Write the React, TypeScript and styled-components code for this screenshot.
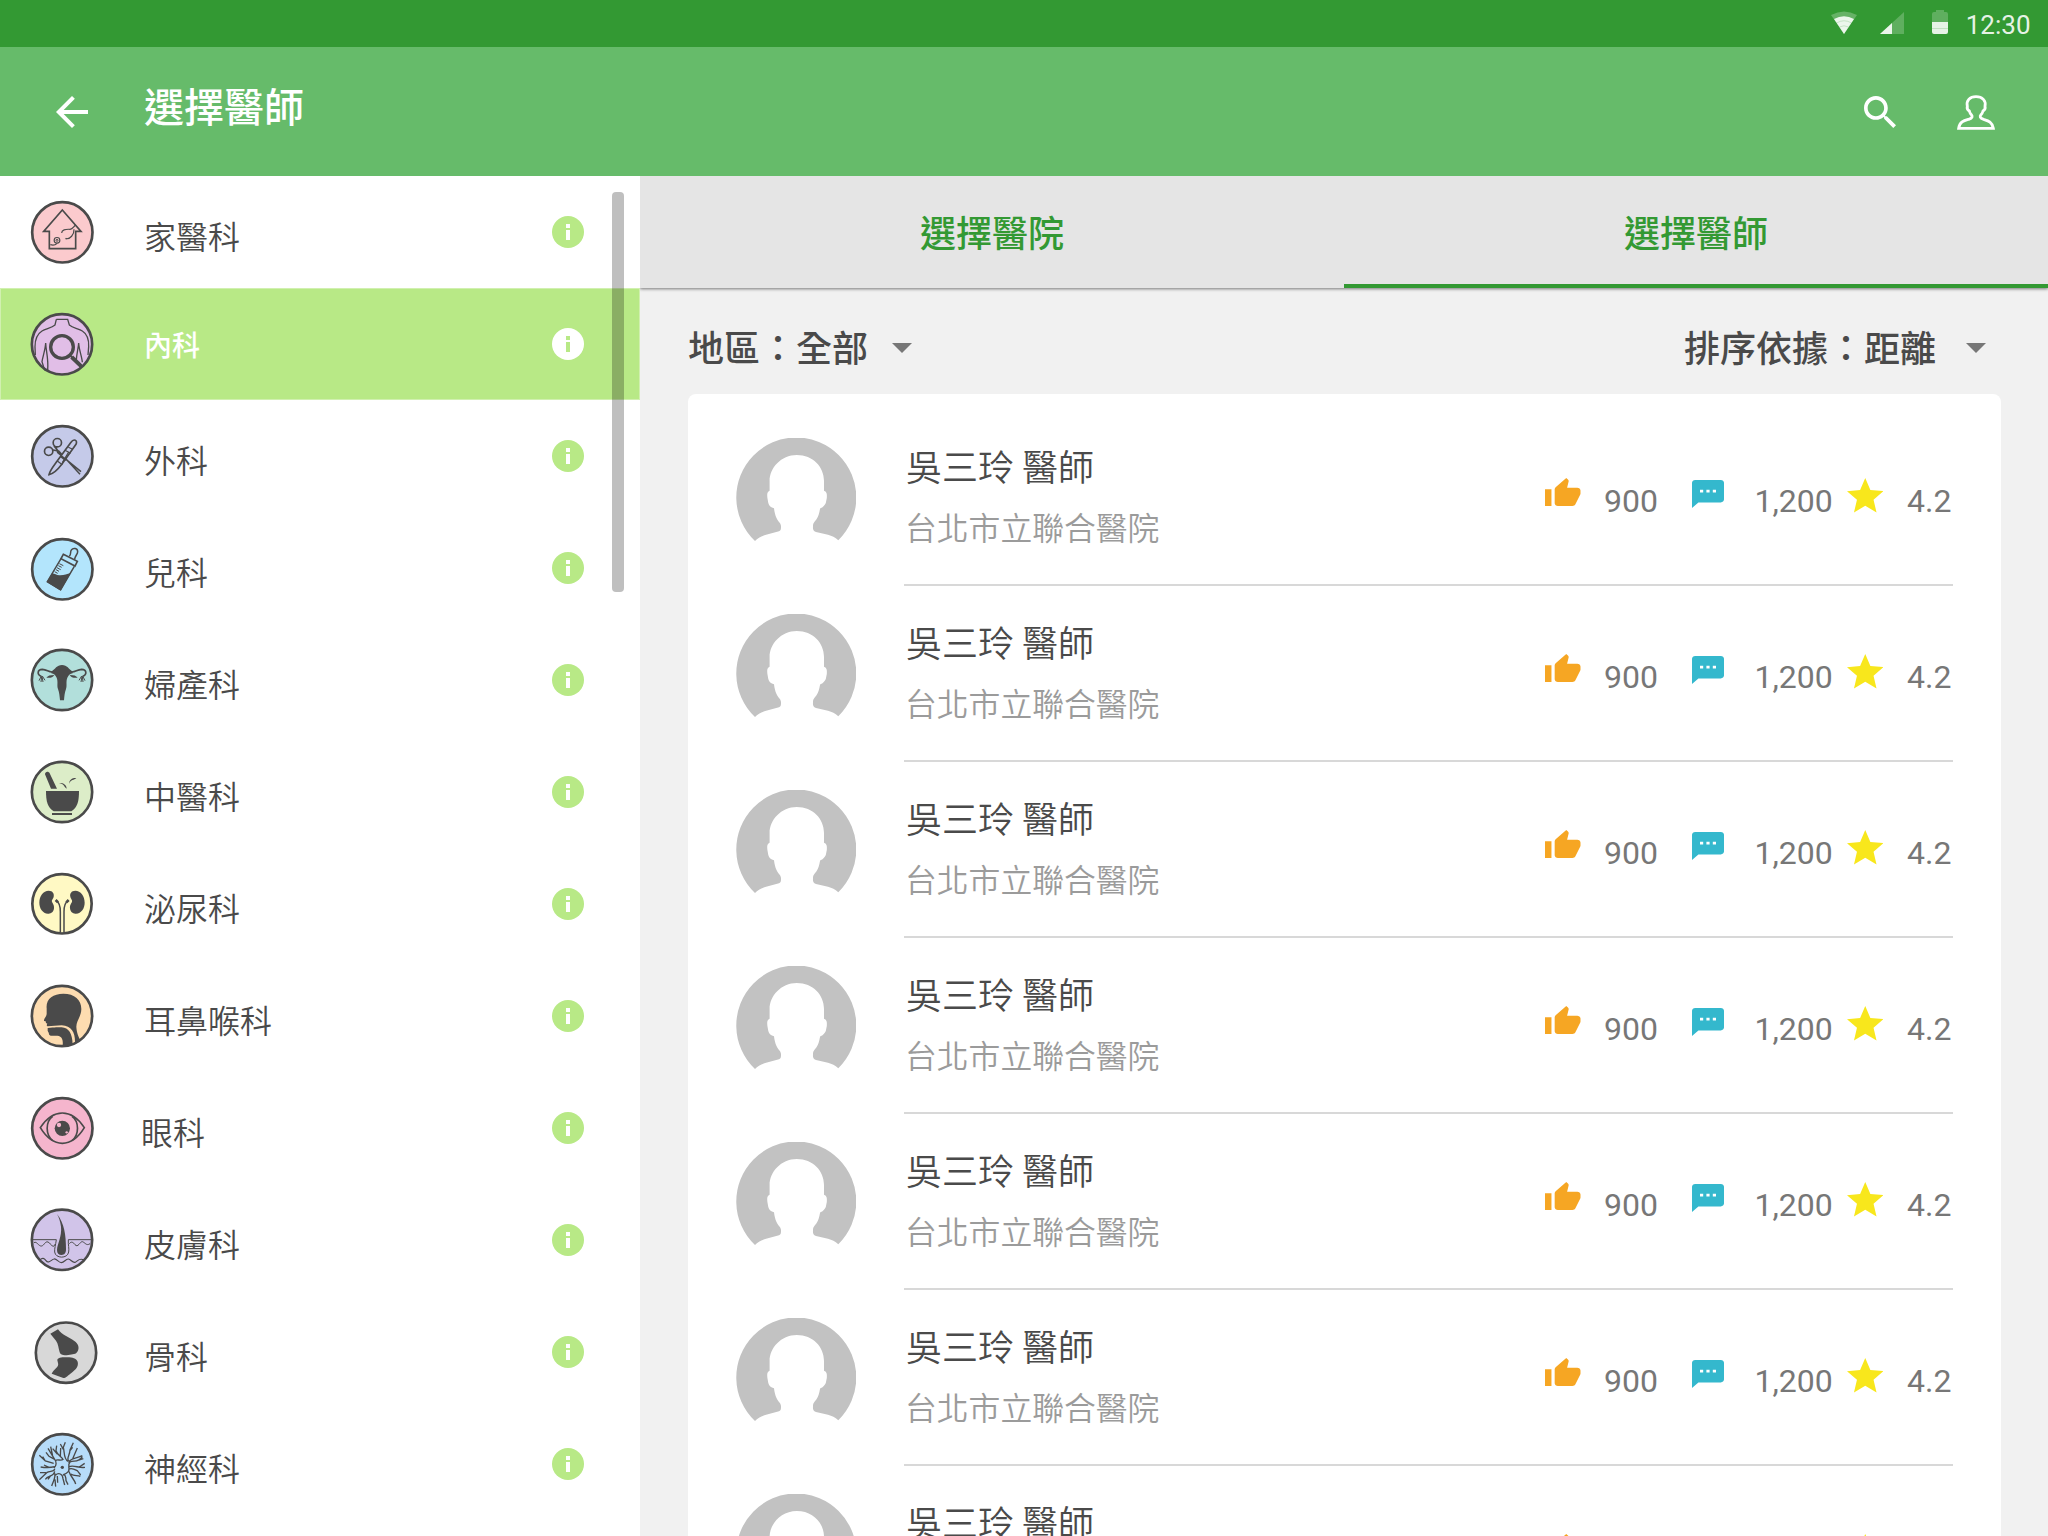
import React from "react";
import styled, { createGlobalStyle } from "styled-components";

const INK = "#4a4a4a";
const LIME = "#b8e986";
const GREEN = "#339933";

const GlobalStyle = createGlobalStyle`
  * { box-sizing: border-box; }
  body {
    margin: 0;
    overflow: hidden;
    background: #f1f1f1;
    font-family: Roboto, "Noto Sans CJK TC", sans-serif;
    color: ${INK};
  }
`;

const Screen = styled.div`
  display: flex;
  flex-direction: column;
  width: 2048px;
  height: 1536px;
  overflow: hidden;
`;

const StatusBar = styled.div`
  flex: none;
  height: 47px;
  background: ${GREEN};
  display: flex;
  justify-content: flex-end;
  padding: 9px 17.500px 0 0;
`;

const StatusIcon = styled.svg<{ $gap: number }>`
  display: block;
  flex: none;
  margin-right: ${(p) => p.$gap}px;
`;

const Clock = styled.span`
  font-size: 26px;
  line-height: 32px;
  color: rgba(255, 255, 255, 0.9);
`;

const AppBar = styled.header`
  flex: none;
  height: 129px;
  background: #66bb6a;
  color: #fff;
  display: flex;
  align-items: center;
  padding: 0 50px 0 48px;
`;

const Title = styled.h1`
  flex: 1;
  margin: 0 0 14px 48px;
  font-family: "Noto Sans CJK TC", sans-serif;
  font-size: 40px;
  line-height: 56px;
  font-weight: 500;
`;

const BarIcon = styled.svg<{ $gap?: number }>`
  display: block;
  flex: none;
  margin-right: ${(p) => p.$gap ?? 0}px;
`;

const Body = styled.div`
  flex: 1;
  min-height: 0;
  display: flex;
`;

const Sidebar = styled.nav`
  position: relative;
  flex: none;
  width: 640px;
  background: #fff;
  overflow: hidden;
`;

const ScrollThumb = styled.div`
  position: absolute;
  top: 16px;
  right: 16px;
  width: 12px;
  height: 400px;
  border-radius: 4px;
  background: rgba(0, 0, 0, 0.25);
`;

const DeptRow = styled.div<{ $active?: boolean }>`
  height: 112px;
  display: flex;
  align-items: center;
  padding: 0 56px 0 20px;
  background: ${(p) => (p.$active ? LIME : "#fff")};
  box-shadow: ${(p) => (p.$active ? "inset 0 0 0 1px rgba(255,255,255,.35)" : "none")};
`;

const DeptIcon = styled.svg`
  display: block;
  flex: none;
  width: 90px;
  height: 112px;
`;

const DeptName = styled.span<{ $active?: boolean; $shift?: number }>`
  flex: 1;
  padding-top: ${(p) => (p.$active ? 0 : 5)}px;
  margin-left: ${(p) => 34 + (p.$shift ?? 0)}px;
  font-family: "Noto Sans CJK TC", sans-serif;
  font-size: ${(p) => (p.$active ? 28 : 32)}px;
  font-weight: ${(p) => (p.$active ? 500 : 350)};
  line-height: 48px;
  color: ${(p) => (p.$active ? "#fff" : INK)};
`;

const Main = styled.main`
  flex: 1;
  min-width: 0;
  display: flex;
  flex-direction: column;
  background: #f1f1f1;
`;

const Tabs = styled.div`
  flex: none;
  display: flex;
  height: 112px;
  background: #e5e5e5;
  box-shadow: 0 1px 3px rgba(0, 0, 0, 0.5);
  clip-path: inset(0 0 -6px 0);
`;

const Tab = styled.div<{ $active?: boolean }>`
  flex: 1;
  display: flex;
  justify-content: center;
  padding-top: 29px;
  font-family: "Noto Sans CJK TC", sans-serif;
  font-size: 36px;
  line-height: 52px;
  font-weight: 500;
  color: ${GREEN};
  border-bottom: ${(p) => (p.$active ? `4px solid ${GREEN}` : "none")};
`;

const Filters = styled.div`
  flex: none;
  height: 106px;
  display: flex;
  justify-content: space-between;
  padding: 32px 48px 0;
`;

const Filter = styled.div<{ $gap: number }>`
  display: flex;
  align-items: flex-start;
  gap: ${(p) => p.$gap}px;
  font-family: "Noto Sans CJK TC", sans-serif;
  font-size: 36px;
  line-height: 52px;
  font-weight: 500;
`;

const Caret = styled.svg`
  display: block;
  width: 48px;
  height: 48px;
  margin-top: 3px;
`;

const Card = styled.section`
  flex: 1;
  min-height: 0;
  overflow: hidden;
  margin: 0 47px 0 48px;
  padding: 16px 48px 0;
  background: #fff;
  border-radius: 8px 8px 0 0;
`;

const Doctor = styled.article`
  height: 176px;
  display: flex;
  gap: 48px;
`;

const Avatar = styled.svg`
  flex: none;
  display: block;
  width: 120px;
  height: 120px;
  margin-top: 28px;
`;

const DoctorBody = styled.div`
  flex: 1;
  display: flex;
  justify-content: space-between;
  border-bottom: 2px solid #d8d8d8;
`;

const Identity = styled.div`
  padding: 29px 0 0 2px;
  font-family: "Noto Sans CJK TC", sans-serif;
  font-weight: 350;
`;

const Name = styled.div`
  font-size: 36px;
  line-height: 52px;
  white-space: pre;
`;

const Hospital = styled.div`
  margin: 11px 0 0 -1px;
  font-size: 31.800px;
  line-height: 48px;
  color: #9b9b9b;
`;

const Stats = styled.div`
  display: grid;
  grid-template-columns: 59px 88px 62.5px 92px 60.5px 46px;
  align-items: start;
  padding-top: 68px;
`;

const Stat = styled.span`
  padding-top: 4px;
  font-family: Roboto, sans-serif;
  font-size: 32px;
  line-height: 38px;
  color: #777;
`;

const StatIcon = styled.svg<{ $top: number }>`
  display: block;
  margin-top: ${(p) => p.$top}px;
`;

const Ring = ({ cx = 127, cy, r = 90.5, fill }: { cx?: number; cy: number; r?: number; fill: string }) => (
  <circle cx={cx} cy={cy} r={r} fill={fill} stroke={INK} strokeWidth="8" />
);

const HomeArt = (
  <>
    <Ring cy={127} fill="#fbcacd" />
    <path d="M127 60 L183 124 H167 V176 H88 V124 H71 Z" strokeWidth="5" />
    <path d="M125 129 C125 120 136 117 151 118 M150 118 C158 118 160 111 167 105 M162 118 C163 134 150 148 138 146 M111 160 C107 164 104 168 91 164" strokeWidth="3.500" />
    <circle cx="111" cy="151" r="8.500" strokeWidth="3.500" />
    <circle cx="111" cy="151" r="3" strokeWidth="3" />
    <circle cx="138" cy="146" r="1.500" strokeWidth="2" />
  </>
);

const TorsoArt = (
  <>
    <Ring cx={126} cy={463} fill="#e1bee7" />
    <path d="M109 388 H143 L148 405 C158 414 176 416 187 423 C203 433 207 448 206 470 L204 495 M109 388 L105 405 C95 414 77 416 66 423 C50 433 45 448 45 470 L46 495" strokeWidth="4" />
    <path d="M77 459 C76 480 68 500 66 515 L74 541 M77 459 C78 485 86 505 83 541 M176 459 C175 475 170 490 169 510 M176 459 C177 480 186 500 187 517" strokeWidth="4" />
    <circle cx="126" cy="471" r="34" strokeWidth="10" />
    <path d="M155 501 L184 529" strokeWidth="12" />
    <path d="M150 496 L160 506" strokeWidth="6" />
  </>
);

const SurgeryArt = (
  <>
    <Ring cy={799} fill="#c5cae9" />
    <circle cx="112" cy="758" r="12.500" strokeWidth="5" />
    <circle cx="86" cy="784" r="12.500" strokeWidth="5" />
    <path d="M108 770 L113 788 L183 845 M98 780 L116 783 L180 853 M102 768 L122 792" strokeWidth="4.500" />
    <path d="M87 854 C90 841 101 828 111 814 L153 757 C161 745 174 750 168 763 L126 822 C114 838 102 851 87 854 Z" fill="#c5cae9" strokeWidth="5" />
    <path d="M112 813 L127 824 M135 781 L152 790 M127 818 L146 786 M145 772 L158 778" strokeWidth="3.500" />
    <path d="M122 798 L138 810" strokeWidth="7" />
  </>
);

const BottleArt = (
  <>
    <Ring cy={133} fill="#b3e5fc" />
    <path d="M148 94 C154 88 150 80 154 75 C160 67 173 70 173 80 C173 88 165 92 164 103" strokeWidth="4.500" />
    <path d="M130 88 L172 109 L165 123 L123 101 Z" strokeWidth="5" />
    <path d="M123 101 L82 170 L122 194 L163 124" strokeWidth="4.500" />
    <path d="M96 145 C106 146 108 151 118 151 C132 152 140 146 152 144 L122 197 L80 171 Z" fill={INK} stroke="none" />
    <path d="M118 116 L130 122 M115 122 L125 127 M111 128 L122 134 M108 134 L117 139 M104 140 L113 145" strokeWidth="3" />
  </>
);

const UterusArt = (
  <>
    <Ring cx={126} cy={465} fill="#b2dfdb" />
    <path d="M94 440 C106 432 110 420 126 420 C142 420 146 432 158 440 L158 445 C150 446 147 450 142 458 C137 470 142 482 138 492 C134 502 133 515 132 526 L120 526 C119 515 118 502 114 492 C110 482 115 470 110 458 C105 450 102 446 94 445 Z" fill={INK} stroke="none" />
    <path d="M98 441 C85 442 82 434 67 433 C52 433 50 449 64 454 M154 441 C167 442 170 434 185 433 C200 433 202 449 188 454" strokeWidth="5" />
    <path d="M64 453 L57 467 M65 454 L63 471 M66 454 L69 471 M67 453 L75 466 M188 453 L195 467 M187 454 L189 471 M186 454 L183 471 M185 453 L177 466" strokeWidth="3" />
    <path d="M79 458 C84 452 90 450 103 450 C99 458 90 459 79 458 Z M173 458 C168 452 162 450 149 450 C153 458 162 459 173 458 Z" fill={INK} stroke="none" />
  </>
);

const MortarArt = (
  <>
    <Ring cx={126} cy={801} fill="#dcedc8" />
    <g fill={INK} stroke="none">
      <path d="M75 748 C75 739 86 738 89 745 L111 791 H93 Z" />
      <path d="M78 798 H177 C177 830 172 848 154 859 H101 C83 848 78 830 78 798 Z" />
      <path d="M96 864 H156 V870 H96 Z" />
      <path d="M117 774 C129 773 140 779 140 791 C132 787 133 776 117 774 Z" />
      <path d="M147 776 C148 764 157 758 169 759 C162 766 153 763 147 776 Z" />
    </g>
  </>
);

const KidneyArt = (
  <>
    <Ring cx={126} cy={131.5} r={89} fill="#fff9c4" />
    <g fill={INK} stroke="none">
      <path d="M86 92 C98 92 103 101 101 110 C100 117 94 119 96 125 C98 131 103 134 102 145 C101 156 93 162 84 161 C68 160 58 145 58 128 C58 108 70 92 86 92 Z" />
      <path d="M166 92 C154 92 149 101 151 110 C152 117 158 119 156 125 C154 131 149 134 150 145 C151 156 159 162 168 161 C184 160 194 145 194 128 C194 108 182 92 166 92 Z" />
    </g>
    <path d="M108 121 C118 127 121 139 121 155 L121 217 M145 121 C135 127 132 139 132 155 L132 217" strokeWidth="4.500" />
    <path d="M107 120 L114 127 M146 120 L139 127" strokeWidth="8" />
  </>
);

const HeadArt = (
  <>
    <Ring cx={126} cy={468} fill="#fddcb0" />
    <g fill={INK} stroke="none">
      <path d="M80 445 C77 418 98 401 130 401 C164 401 184 419 184 447 C184 469 169 482 169 500 C170 520 176 531 181 540 L165 549 C166 520 156 497 125 496 L83 499 C79 498 80 493 82 491 L78 489 L77 484 L72 483 C71 475 81 470 80 458 Z" />
      <path d="M83 504 C105 502 115 502 125 502 C146 503 157 520 158 554 L128 558 C130 540 126 528 112 527 L92 527 C85 526 88 519 85 517 L83 512 Z" />
    </g>
  </>
);

const EyeArt = (
  <>
    <Ring cy={805} fill="#f5b5cd" />
    <path d="M61 803 C80 774 100 759 127 759 C154 759 174 774 193 803 C174 834 154 850 127 850 C100 850 80 834 61 803 Z" strokeWidth="5" />
    <path d="M98 769 C76 785 76 824 98 842 M156 769 C178 785 178 824 156 842" strokeWidth="5" />
    <circle cx="127" cy="805" r="23" fill={INK} stroke="none" />
    <circle cx="117" cy="795" r="6.500" fill="#f5b5cd" stroke="none" />
    <circle cx="140" cy="817" r="3.500" fill="#f5b5cd" stroke="none" />
  </>
);

const HairArt = (
  <>
    <Ring cx={126} cy={119.5} fill="#d1c4e9" />
    <path d="M111 42 C133 70 138 105 138 148 C138 160 133 165 125 165 C116 165 111 160 111 150 C112 130 126 110 123 80 C121 64 117 53 111 42 Z" fill={INK} stroke="none" />
    <path d="M39 119 H109 C107 135 103 145 104 156 C106 176 143 177 146 156 C148 145 144 135 145 119 H213" strokeWidth="3" />
    <path d="M42 128 C50 122 56 140 65 138 C73 136 75 123 84 126 C91 128 94 140 101 139 L106 132 M148 131 C154 123 160 127 165 134 C174 145 180 124 187 125 C195 127 199 139 210 131" strokeWidth="3" />
    <path d="M60 180 C67 172 72 174 78 182 C86 193 95 178 102 177 C110 175 115 188 124 188 C133 188 137 176 145 177 C153 178 157 189 165 187 C173 185 176 172 192 180" strokeWidth="3.500" />
  </>
);

const BoneArt = (
  <>
    <Ring cx={138} cy={458} fill="#d8d8d8" />
    <g fill={INK} stroke="none">
      <path d="M91 401 L114 388 C126 406 147 411 163 423 C175 431 179 443 173 454 C168 464 158 463 145 465 C134 467 122 467 119 457 C115 443 115 431 108 422 Z" />
      <path d="M112 481 C112 473 124 472 136 472 C153 471 168 473 173 485 C177 500 165 510 155 518 C144 526 138 534 130 534 L95 521 C102 507 118 501 114 489 Z" />
    </g>
  </>
);

const NerveArt = (
  <>
    <Ring cy={793} fill="#b7dcf9" />
    <path
      d="M102 804 C110 797 110 785 104 778 L84 745 M98 768 L92 740 M104 778 L87 769 L78 757 M101 790 L76 783 L58 766 M76 783 L68 770 M104 800 C96 802 82 804 62 801 M88 803 L72 795 M104 806 C104 816 90 812 80 818 L58 839 M78 818 L60 818 M104 814 C102 830 84 826 76 838 M91 828 L84 838 M104 820 C108 832 100 842 95 858 M105 838 L107 860 M112 828 L113 848 M106 826 C116 816 128 822 129 836 L134 855 M129 826 C134 820 138 830 138 842 L144 854 M130 824 C142 820 150 812 146 806 M147 814 C151 830 164 838 167 852 M152 822 C164 830 172 824 181 829 M146 808 C154 802 164 808 172 812 L182 825 M147 800 C162 794 176 805 195 802 M178 801 L194 790 M147 806 C146 798 144 792 150 786 C162 780 174 790 187 770 M176 780 L190 776 M146 788 C152 772 166 778 187 767 M158 776 L172 744 M148 784 C136 778 150 766 150 750 L160 728 M150 752 L158 742 M144 784 C130 776 134 755 130 742 L136 727 M130 748 L121 732 M130 780 C124 768 114 768 108 752 L110 737 M121 770 L122 744 M112 762 L98 746 M106 782 C112 776 122 784 130 778"
      strokeWidth="4"
    />
    <circle cx="127" cy="802" r="5" fill={INK} stroke="none" />
  </>
);

interface Dept {
  name: string;
  top: number;
  art: React.ReactNode;
  active?: boolean;
  shift?: number;
}

const departments: Dept[] = [
  { name: "家醫科", top: -42, art: HomeArt },
  { name: "內科", top: 294, art: TorsoArt, active: true },
  { name: "外科", top: 630, art: SurgeryArt },
  { name: "兒科", top: -39, art: BottleArt },
  { name: "婦產科", top: 297, art: UterusArt },
  { name: "中醫科", top: 633, art: MortarArt },
  { name: "泌尿科", top: -36, art: KidneyArt },
  { name: "耳鼻喉科", top: 300, art: HeadArt },
  { name: "眼科", top: 636, art: EyeArt, shift: -3 },
  { name: "皮膚科", top: -48, art: HairArt },
  { name: "骨科", top: 288, art: BoneArt },
  { name: "神經科", top: 624, art: NerveArt },
];

const InfoIcon = ({ active }: { active?: boolean }) => (
  <svg width="32" height="32" viewBox="0 0 32 32">
    <circle cx="16" cy="16" r="16" fill={active ? "#fff" : LIME} />
    <path d="M14 8h4v4h-4z M14 14h4v10h-4z" fill={active ? LIME : "#fff"} />
  </svg>
);

const DropCaret = () => (
  <Caret viewBox="0 0 24 24">
    <path d="M7 10l5 5 5-5z" fill="#777" />
  </Caret>
);

const DoctorRow = () => (
  <Doctor>
    <Avatar viewBox="0 0 120 120">
      <path
        fill="#c2c2c2"
        d="M19 103 A60 60 0 1 1 102.300 102.300 C99 99 96 98 92 96.800 L80 94 C77 93 76.800 91 77 88 C77 84 79.500 84 82 78.500 C83.500 75 83.600 72 84.300 70.300 C87 69.500 89 67 89.800 65 L90.800 60 C91 56 91 54 88 52.700 L88 43 C88 29 77 17 60.800 17 C45 17 33.600 30 33.600 43 L33.600 52.700 C31 54 31 56 31.400 60 L32.300 65 C33 68 35 69.500 38 70.300 C38.500 74 39 77 40.500 80 C43 85 45 85 45 88.500 C45 91 45 92.500 43 93.300 L31 96.500 C26 98 22 99.500 19 103 Z"
      />
    </Avatar>
    <DoctorBody>
      <Identity>
        <Name>吳三玲 醫師</Name>
        <Hospital>台北市立聯合醫院</Hospital>
      </Identity>
      <Stats>
        <StatIcon $top={0} width="35.500" height="28" viewBox="1 1 22 20" preserveAspectRatio="none">
          <path fill="#f6a623" d="M1 21h4V9H1v12zm22-11c0-1.100-.9-2-2-2h-6.310l.95-4.570.03-.32c0-.41-.17-.79-.44-1.060L14.170 1 7.590 7.590C7.220 7.950 7 8.450 7 9v10c0 1.100.9 2 2 2h9c.83 0 1.540-.5 1.840-1.220l3.020-7.050c.09-.23.14-.47.14-.73v-2z" />
        </StatIcon>
        <Stat>900</Stat>
        <StatIcon $top={1.5} width="32" height="28" viewBox="2 2 20 20" preserveAspectRatio="none">
          <path fill="#34b8cd" d="M20 2H4c-1.100 0-1.990.9-1.990 2L2 22l4-4h14c1.100 0 2-.9 2-2V4c0-1.100-.9-2-2-2zM9 11H7V9h2v2zm4 0h-2V9h2v2zm4 0h-2V9h2v2z" />
        </StatIcon>
        <Stat>1,200</Stat>
        <StatIcon $top={0} width="36.500" height="34.500" viewBox="2 2 20 19" preserveAspectRatio="none">
          <path fill="#f8e71c" d="M12 17.270L18.180 21l-1.640-7.030L22 9.240l-7.190-.61L12 2 9.190 8.630 2 9.240l5.460 4.730L5.820 21z" />
        </StatIcon>
        <Stat>4.2</Stat>
      </Stats>
    </DoctorBody>
  </Doctor>
);

export default function App() {
  return (
    <Screen>
      <GlobalStyle />
      <StatusBar>
        <StatusIcon $gap={22} width="28" height="26" viewBox="0 0 28 26">
          <path d="M1 6 Q14 -1 27 6 L14 25 Z" fill="#fff" fillOpacity=".25" />
          <path d="M4 10 Q14 4.500 24 10 L14 25 Z" fill="#fff" fillOpacity=".88" />
          <path d="M6.500 14 Q14 9.500 21.500 14 M9.500 18 Q14 15.500 18.500 18" fill="none" stroke={GREEN} strokeOpacity=".2" />
        </StatusIcon>
        <StatusIcon $gap={27} width="25" height="26" viewBox="0 0 25 26">
          <path d="M0 25 L24 3 V25 Z" fill="#fff" fillOpacity=".22" />
          <path d="M0 25 L12 14 V25 Z" fill="#fff" fillOpacity=".88" />
        </StatusIcon>
        <StatusIcon $gap={18} width="16" height="26" viewBox="0 0 16 26">
          <path d="M0 13 V5 Q0 3 2 3 H4 V1 H12 V3 H14 Q16 3 16 5 V13 Z" fill="#fff" fillOpacity=".22" />
          <path d="M0 13 H16 V23 Q16 25 14 25 H2 Q0 25 0 23 Z" fill="#fff" fillOpacity=".88" />
          <path d="M0 19.500 H16" stroke={GREEN} strokeOpacity=".2" />
        </StatusIcon>
        <Clock>12:30</Clock>
      </StatusBar>
      <AppBar>
        <BarIcon width="48" height="48" viewBox="0 0 24 24">
          <path fill="#fff" d="M20 11H7.830l5.590-5.590L12 4l-8 8 8 8 1.410-1.410L7.830 13H20v-2z" />
        </BarIcon>
        <Title>選擇醫師</Title>
        <BarIcon $gap={58} width="32" height="32" viewBox="3 3 17.490 17.490">
          <path fill="#fff" d="M15.500 14h-.79l-.28-.27C15.410 12.590 16 11.110 16 9.500 16 5.910 13.090 3 9.500 3S3 5.910 3 9.500 5.910 16 9.500 16c1.610 0 3.090-.59 4.230-1.570l.27.28v.79l5 4.990L20.490 19l-4.990-5zm-6 0C7.010 14 5 11.990 5 9.500S7.010 5 9.500 5 14 7.010 14 9.500 11.990 14 9.500 14z" />
        </BarIcon>
        <BarIcon width="44" height="38" viewBox="882 279 132 114">
          <path
            d="M896 385 C899 365 912 362 926 358 C938 354 938 349 934 344 C930 340 929 337 928 333 C923 330 920 326 922 319 C918 302 929 290 948 290 C967 290 979 302 975 319 C977 326 974 330 969 333 C968 337 967 340 963 344 C959 349 959 354 971 358 C984 362 997 365 1000 385 Z"
            fill="none"
            stroke="#fff"
            strokeWidth="8.500"
          />
        </BarIcon>
      </AppBar>
      <Body>
        <Sidebar>
          {departments.map((d) => (
            <DeptRow key={d.name} $active={d.active}>
              <DeptIcon viewBox={`0 ${d.top} 270 336`} fill="none" stroke={INK}>
                {d.art}
              </DeptIcon>
              <DeptName $active={d.active} $shift={d.shift}>
                {d.name}
              </DeptName>
              <InfoIcon active={d.active} />
            </DeptRow>
          ))}
          <ScrollThumb />
        </Sidebar>
        <Main>
          <Tabs>
            <Tab>選擇醫院</Tab>
            <Tab $active>選擇醫師</Tab>
          </Tabs>
          <Filters>
            <Filter $gap={10}>
              地區：全部
              <DropCaret />
            </Filter>
            <Filter $gap={16}>
              排序依據：距離
              <DropCaret />
            </Filter>
          </Filters>
          <Card>
            {Array.from({ length: 7 }, (_, i) => (
              <DoctorRow key={i} />
            ))}
          </Card>
        </Main>
      </Body>
    </Screen>
  );
}
